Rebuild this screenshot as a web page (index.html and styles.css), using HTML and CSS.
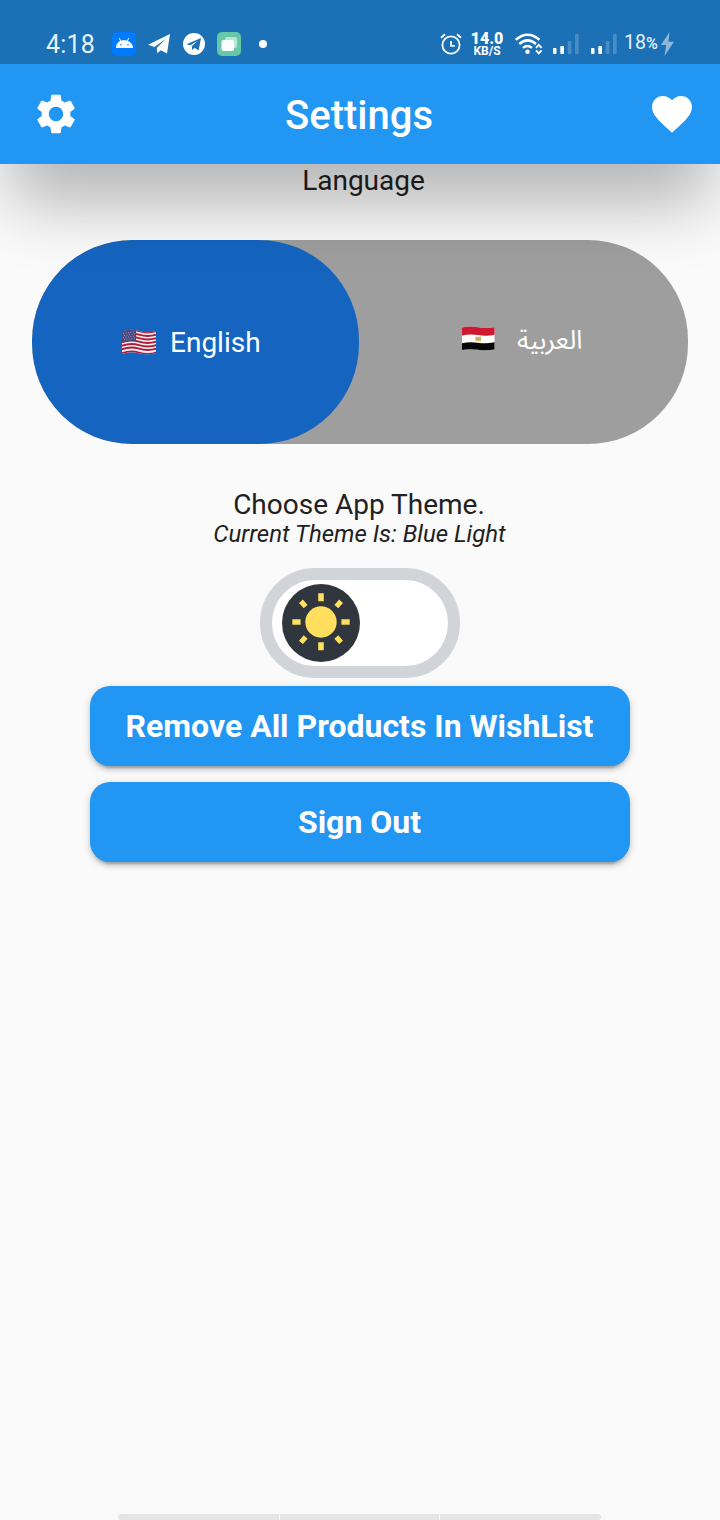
FILE: index.html
```html
<!DOCTYPE html>
<html lang="en">
<head>
<meta charset="utf-8">
<title>Settings</title>
<link rel="stylesheet" href="styles.css">
</head>
<body>
<div class="screen">
  <header class="header">
    <div class="statusbar">
      <div class="status-left">
        <span class="clock">4:18</span>
        <svg class="app-icon" viewBox="0 0 24 24"><rect width="24" height="24" rx="5" fill="#007bff"/><path d="M4 16c0-3.300 1.700-5.700 4.300-6.900L6.800 6.600l.8-.5 1.600 2.600c1.700-.6 3.900-.6 5.600 0l1.600-2.600.8.500-1.500 2.500C18.500 10.300 21 12.700 21 16z" fill="#fff"/><circle cx="9" cy="12.700" r=".8" fill="#007bff"/><circle cx="16" cy="12.700" r=".8" fill="#007bff"/></svg>
        <svg class="plane" viewBox="0 0 22 20"><path d="M0 10.700 22 0l-3 19.500-6.300-3.300-3.300 3.100-.7-5.200 9.300-9.300L6.400 13z" fill="#fff"/></svg>
        <svg class="telegram" viewBox="0 0 22 22"><circle cx="11" cy="11" r="11" fill="#fff"/><path d="M3.500 11.200 18 5l-2.400 12.500-4-2.700-2.300 2.300-.6-3.900 6.200-5.600-7.500 4.700z" fill="#1b70b6"/></svg>
        <svg class="copy" viewBox="0 0 24 24"><rect width="24" height="24" rx="5" fill="#65c9a6"/><rect x="8" y="5" width="12" height="11" rx="2" fill="#b8e7d5"/><rect x="4.500" y="8" width="12.500" height="11" rx="2" fill="#fff"/></svg>
        <span class="dot"></span>
      </div>
      <div class="status-right">
        <svg class="alarm" viewBox="0 0 22 22" fill="none" stroke="#fff" stroke-width="1.800"><circle cx="11" cy="12" r="8.600"/><path d="M11 8v4.800h3.800M1 4.700 5 1.300M21 4.700l-4-3.400"/></svg>
        <span class="speed"><b>14.0</b><small>KB/S</small></span>
        <svg class="wifi" viewBox="0 0 28 22"><g fill="none" stroke="#fff" stroke-width="2.500"><path d="M.8 6.800Q12.500-3.400 24.500 6.800M4.300 11Q12.500 3.800 21 11M8 14.900q4.500-3.700 9 0"/></g><circle cx="12.500" cy="18.800" r="2.200" fill="#fff"/><path d="m21 14.800 2.800-3 2.800 3M21 17.400l2.800 3 2.800-3" fill="none" stroke="#fff" stroke-width="1.900"/></svg>
        <svg class="signal" viewBox="0 0 26 20" fill="#fff"><rect y="14" width="3.500" height="6" rx="1"/><rect x="7.300" y="12" width="3.700" height="8" rx="1"/><g opacity=".2"><rect x="14.700" y="7" width="3.700" height="13" rx="1"/><rect x="22" width="3.700" height="20" rx="1"/></g></svg>
        <svg class="signal second" viewBox="0 0 26 20" fill="#fff"><rect y="14" width="3.500" height="6" rx="1"/><rect x="7.300" y="12" width="3.700" height="8" rx="1"/><g opacity=".2"><rect x="14.700" y="7" width="3.700" height="13" rx="1"/><rect x="22" width="3.700" height="20" rx="1"/></g></svg>
        <span class="battery">18<small>%</small></span>
        <svg class="bolt" viewBox="0 0 13 24"><path d="M8.500 0 0 13h5.200L3.500 24 13 9.700H7.500z" fill="#8db7db"/></svg>
      </div>
    </div>
    <div class="appbar">
      <svg class="bar-icon" viewBox="0 0 24 24"><path fill="#fff" d="M19.140 12.940c.04-.3.060-.61.060-.94 0-.32-.02-.64-.07-.94l2.030-1.580a.49.49 0 0 0 .12-.61l-1.920-3.320a.488.488 0 0 0-.59-.22l-2.390.96c-.5-.38-1.030-.7-1.620-.94l-.36-2.540a.484.484 0 0 0-.48-.41h-3.840c-.24 0-.43.170-.47.410l-.36 2.540c-.59.240-1.130.570-1.620.940l-2.390-.96c-.22-.08-.47 0-.59.220L2.740 8.870c-.12.210-.08.470.12.610l2.030 1.580c-.05.300-.09.630-.09.940s.02.640.07.940l-2.030 1.580a.49.49 0 0 0-.12.610l1.920 3.320c.12.220.37.290.59.220l2.390-.96c.5.380 1.030.7 1.620.94l.36 2.540c.05.240.24.410.48.410h3.840c.24 0 .44-.17.47-.41l.36-2.540c.59-.24 1.130-.56 1.620-.94l2.390.96c.22.080.47 0 .59-.22l1.920-3.320c.12-.22.070-.47-.12-.61zM12 15.600c-1.980 0-3.600-1.620-3.600-3.600s1.620-3.600 3.600-3.600 3.600 1.620 3.600 3.600-1.620 3.600-3.600 3.600z"/></svg>
      <h1 class="title">Settings</h1>
      <svg class="bar-icon" viewBox="0 0 24 24"><path fill="#fff" d="m12 21.350-1.450-1.320C5.400 15.360 2 12.280 2 8.500 2 5.420 4.420 3 7.500 3c1.740 0 3.410.81 4.500 2.090C13.090 3.810 14.760 3 16.500 3 19.580 3 22 5.420 22 8.500c0 3.780-3.400 6.860-8.550 11.540z"/></svg>
    </div>
  </header>

  <main class="content">
    <p class="label language-label">Language</p>
    <div class="languages">
      <div class="language selected">
        <svg class="flag" viewBox="0 0 36 26">
          <defs><clipPath id="wave"><path d="M1 2.500Q9-.5 18 2t17 0v22q-8 2.500-17 .3T1 25z"/></clipPath></defs>
          <g clip-path="url(#wave)"><rect width="36" height="26" fill="#f4eef0"/><g fill="none" stroke="#a91f3a" stroke-width="1.900"><path d="M0 3.200Q9-.5 18 2.200t18-.2M0 6.700q9-3.700 18-1t18-.2M0 10.200q9-3.700 18-1t18-.2M0 13.700q9-3.700 18-1t18-.2M0 17.200q9-3.700 18-1t18-.2M0 20.700q9-3.700 18-1t18-.2M0 24.700q9-3.700 18-1t18-.2"/></g><path d="M0 0h15v12.300Q8 10.800 0 14z" fill="#4b4b83"/><g stroke="#a5a3c8" stroke-width=".8" stroke-dasharray="1 1.500"><path d="M2 4.500 14 2.800M3 6.600l11-1.700M2 8.700 14 7M3 10.800l11-1.700"/></g></g>
        </svg>
        <span>English</span>
      </div>
      <div class="language arabic">
        <svg class="flag" viewBox="0 0 36 26"><path d="M2 1.500Q10-.3 18 1.200t16.500 0v22.300q-8 1.500-16.500.3T2 24z" fill="#fff"/><path d="M2 1.500Q10-.3 18 1.200t16.500 0v7.600q-8 1.600-16.500.2T2 9.500z" fill="#ce1931"/><path d="M2 17.200q8-1.700 16-.4t16.500-.5v7.200q-8 1.500-16.500.3T2 24z" fill="#080808"/><path d="m15.500 10.500 2 .8 1-.8 1 .8 1.500-.7v4.700l-1.500-.6-1 .8-1-.8-2 .5z" fill="#d6ae62"/></svg>
        <span lang="ar" dir="rtl">العربية</span>
      </div>
    </div>

    <p class="label theme">Choose App Theme.</p>
    <p class="current">Current Theme Is: Blue Light</p>
    <div class="switch">
      <svg class="knob" viewBox="0 0 78 78"><circle cx="39" cy="39" r="39" fill="#2f363d"/><g fill="#ffdf5d"><circle cx="39" cy="38" r="15.700"/><path d="M36.200 9.300h5.600v8h-5.600zM36.200 58.300h5.600v8h-5.600zM10.300 35.200h8.300v5.600h-8.300zM59.400 35.200h8.300v5.600h-8.300z"/><path d="m17 18.900 3.900-3.300 4.700 5.300-3.900 3.400zM61 18.900l-3.900-3.300-4.700 5.300 3.900 3.400zM17 56.700l3.900 3.300 4.700-5.300-3.900-3.400zM61 56.700 57.100 60l-4.700-5.300 3.900-3.400z"/></g></svg>
    </div>
    <button class="action">Remove All Products In WishList</button>
    <button class="action">Sign Out</button>
  </main>
  <footer class="navigation"><span></span><span></span><span></span></footer>
</div>
</body>
</html>
```
FILE: styles.css
```css
* { box-sizing: border-box; }
body { margin: 0; background: #fafafa; color: #212121; font-family: Roboto, "Noto Sans", sans-serif; }
svg { display: block; flex: none; }
h1, p { margin: 0; }
.screen { width: 720px; height: 1520px; display: flex; flex-direction: column; overflow: hidden; }
.header { position: relative; z-index: 1; height: 164px; flex: none; background: #2196f3; box-shadow: 0 50px 66px -11px rgba(0,0,0,.28); }
.statusbar { height: 64px; padding: 24px 46px 0; background: #1b70b6; display: flex; justify-content: space-between; color: #fff; }
.status-left, .status-right { height: 40px; display: flex; align-items: center; }
.clock { width: 66px; font-size: 25px; letter-spacing: .2px; color: #e6f2fc; }
.app-icon, .copy { width: 24px; height: 24px; }
.plane { width: 22px; height: 20px; margin-left: 12px; }
.telegram { width: 22px; height: 22px; margin-left: 13px; }
.copy { margin-left: 12px; }
.dot { width: 8px; height: 8px; border-radius: 50%; background: #fff; margin-left: 18px; }
.alarm { width: 22px; height: 22px; }
.speed { width: 34px; margin: 1px 1px 0 8px; display: flex; flex-direction: column; align-items: center; font-weight: 700; }
.speed b { font-size: 16px; line-height: 13px; }
.speed small { font-size: 12px; line-height: 12px; }
.wifi { width: 28px; height: 22px; margin-left: 10px; }
.signal { width: 26px; height: 20px; margin-left: 10px; }
.second { margin-left: 12px; }
.battery { margin-left: 7px; font-size: 19.5px; line-height: 22px; width: 37px; padding-bottom: 1px; color: #e6f2fc; }
.battery small { font-size: 16px; font-weight: 500; }
.bolt { width: 13px; height: 24px; }
.appbar { height: 100px; padding: 0 24px 0 32px; display: flex; align-items: center; justify-content: space-between; color: #fff; }
.bar-icon { width: 48px; height: 48px; }
.title { font-size: 40px; font-weight: 500; line-height: 48px; padding: 3px 10px 0 0; }
.content { flex: 1; display: flex; flex-direction: column; align-items: center; }
.label { font-size: 28px; line-height: 33px; }
.language-label { padding-left: 7px; }
.languages { width: 656px; height: 204px; margin-top: 43px; display: flex; background: #9e9e9e; border-radius: 100px; overflow: hidden; color: #fff; font-size: 28px; }
.language { width: 327px; padding-left: 89px; display: flex; align-items: center; gap: 13px; line-height: 33px; }
.selected { background: #1565c0; border-radius: 100px; }
.arabic { padding-left: 101px; padding-bottom: 7px; gap: 21px; font-family: "Noto Sans Arabic", "DejaVu Sans", sans-serif; font-size: 26px; }
.arabic span { padding-top: 3px; }
.flag { width: 36px; height: 26px; }
.theme { margin-top: 44px; padding-right: 2px; }
.current { font-size: 24px; line-height: 26px; height: 28px; padding-right: 1px; font-style: italic; }
.switch { width: 200px; height: 110px; margin-top: 19px; flex: none; border: 12px solid #d1d5da; border-radius: 55px; background: #fff; padding: 4px 10px; }
.knob { width: 78px; height: 78px; }
.action { width: 540px; height: 80px; flex: none; margin: 8px 0; padding: 0 1px 0 0; border: 0; border-radius: 20px; background: #2196f3; color: #fff; font: 700 32px/38px Roboto, sans-serif; box-shadow: 0 6px 2px -4px rgba(0,0,0,.2), 0 4px 4px rgba(0,0,0,.14), 0 2px 10px rgba(0,0,0,.12); }
.navigation { height: 6px; width: 483px; margin-left: 118px; display: grid; grid-template-columns: 161px 159px 161px; gap: 1px; overflow: hidden; border-radius: 3px; }
.navigation span { background: #e5e5e5; }
```
